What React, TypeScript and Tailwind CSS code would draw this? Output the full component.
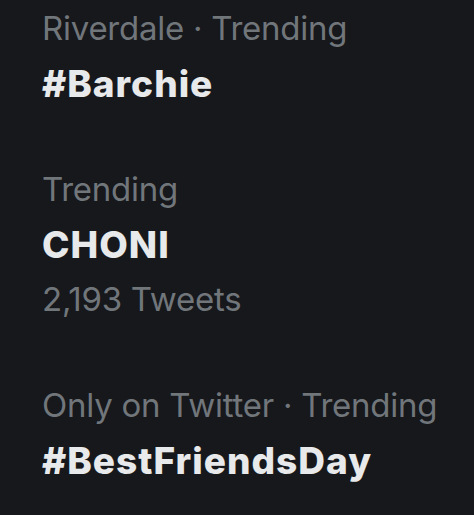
import React from 'react';

type Trend = { context: string; title: string; count?: string };

const TRENDS: Trend[] = [
  { context: 'Riverdale · Trending', title: '#Barchie' },
  { context: 'Trending', title: 'CHONI', count: '2,193 Tweets' },
  { context: 'Only on Twitter · Trending', title: '#BestFriendsDay' },
];

export default function App() {
  return (
    <div className="min-h-screen w-full bg-[#16181c] pl-[42px] font-['Inter','Liberation_Sans',sans-serif] leading-[55px]">
      <div className="flex flex-col gap-[51px] pt-[1px]">
        {TRENDS.map((t) => (
          <div key={t.title} className="flex flex-col">
            <span className="text-[33px] tracking-[-0.25px] text-[#71767b]">{t.context}</span>
            <span className="text-[37px] font-extrabold tracking-[1px] text-[#e7e9ea]">{t.title}</span>
            {t.count && <span className="text-[33px] tracking-[-0.25px] text-[#71767b]">{t.count}</span>}
          </div>
        ))}
      </div>
    </div>
  );
}
